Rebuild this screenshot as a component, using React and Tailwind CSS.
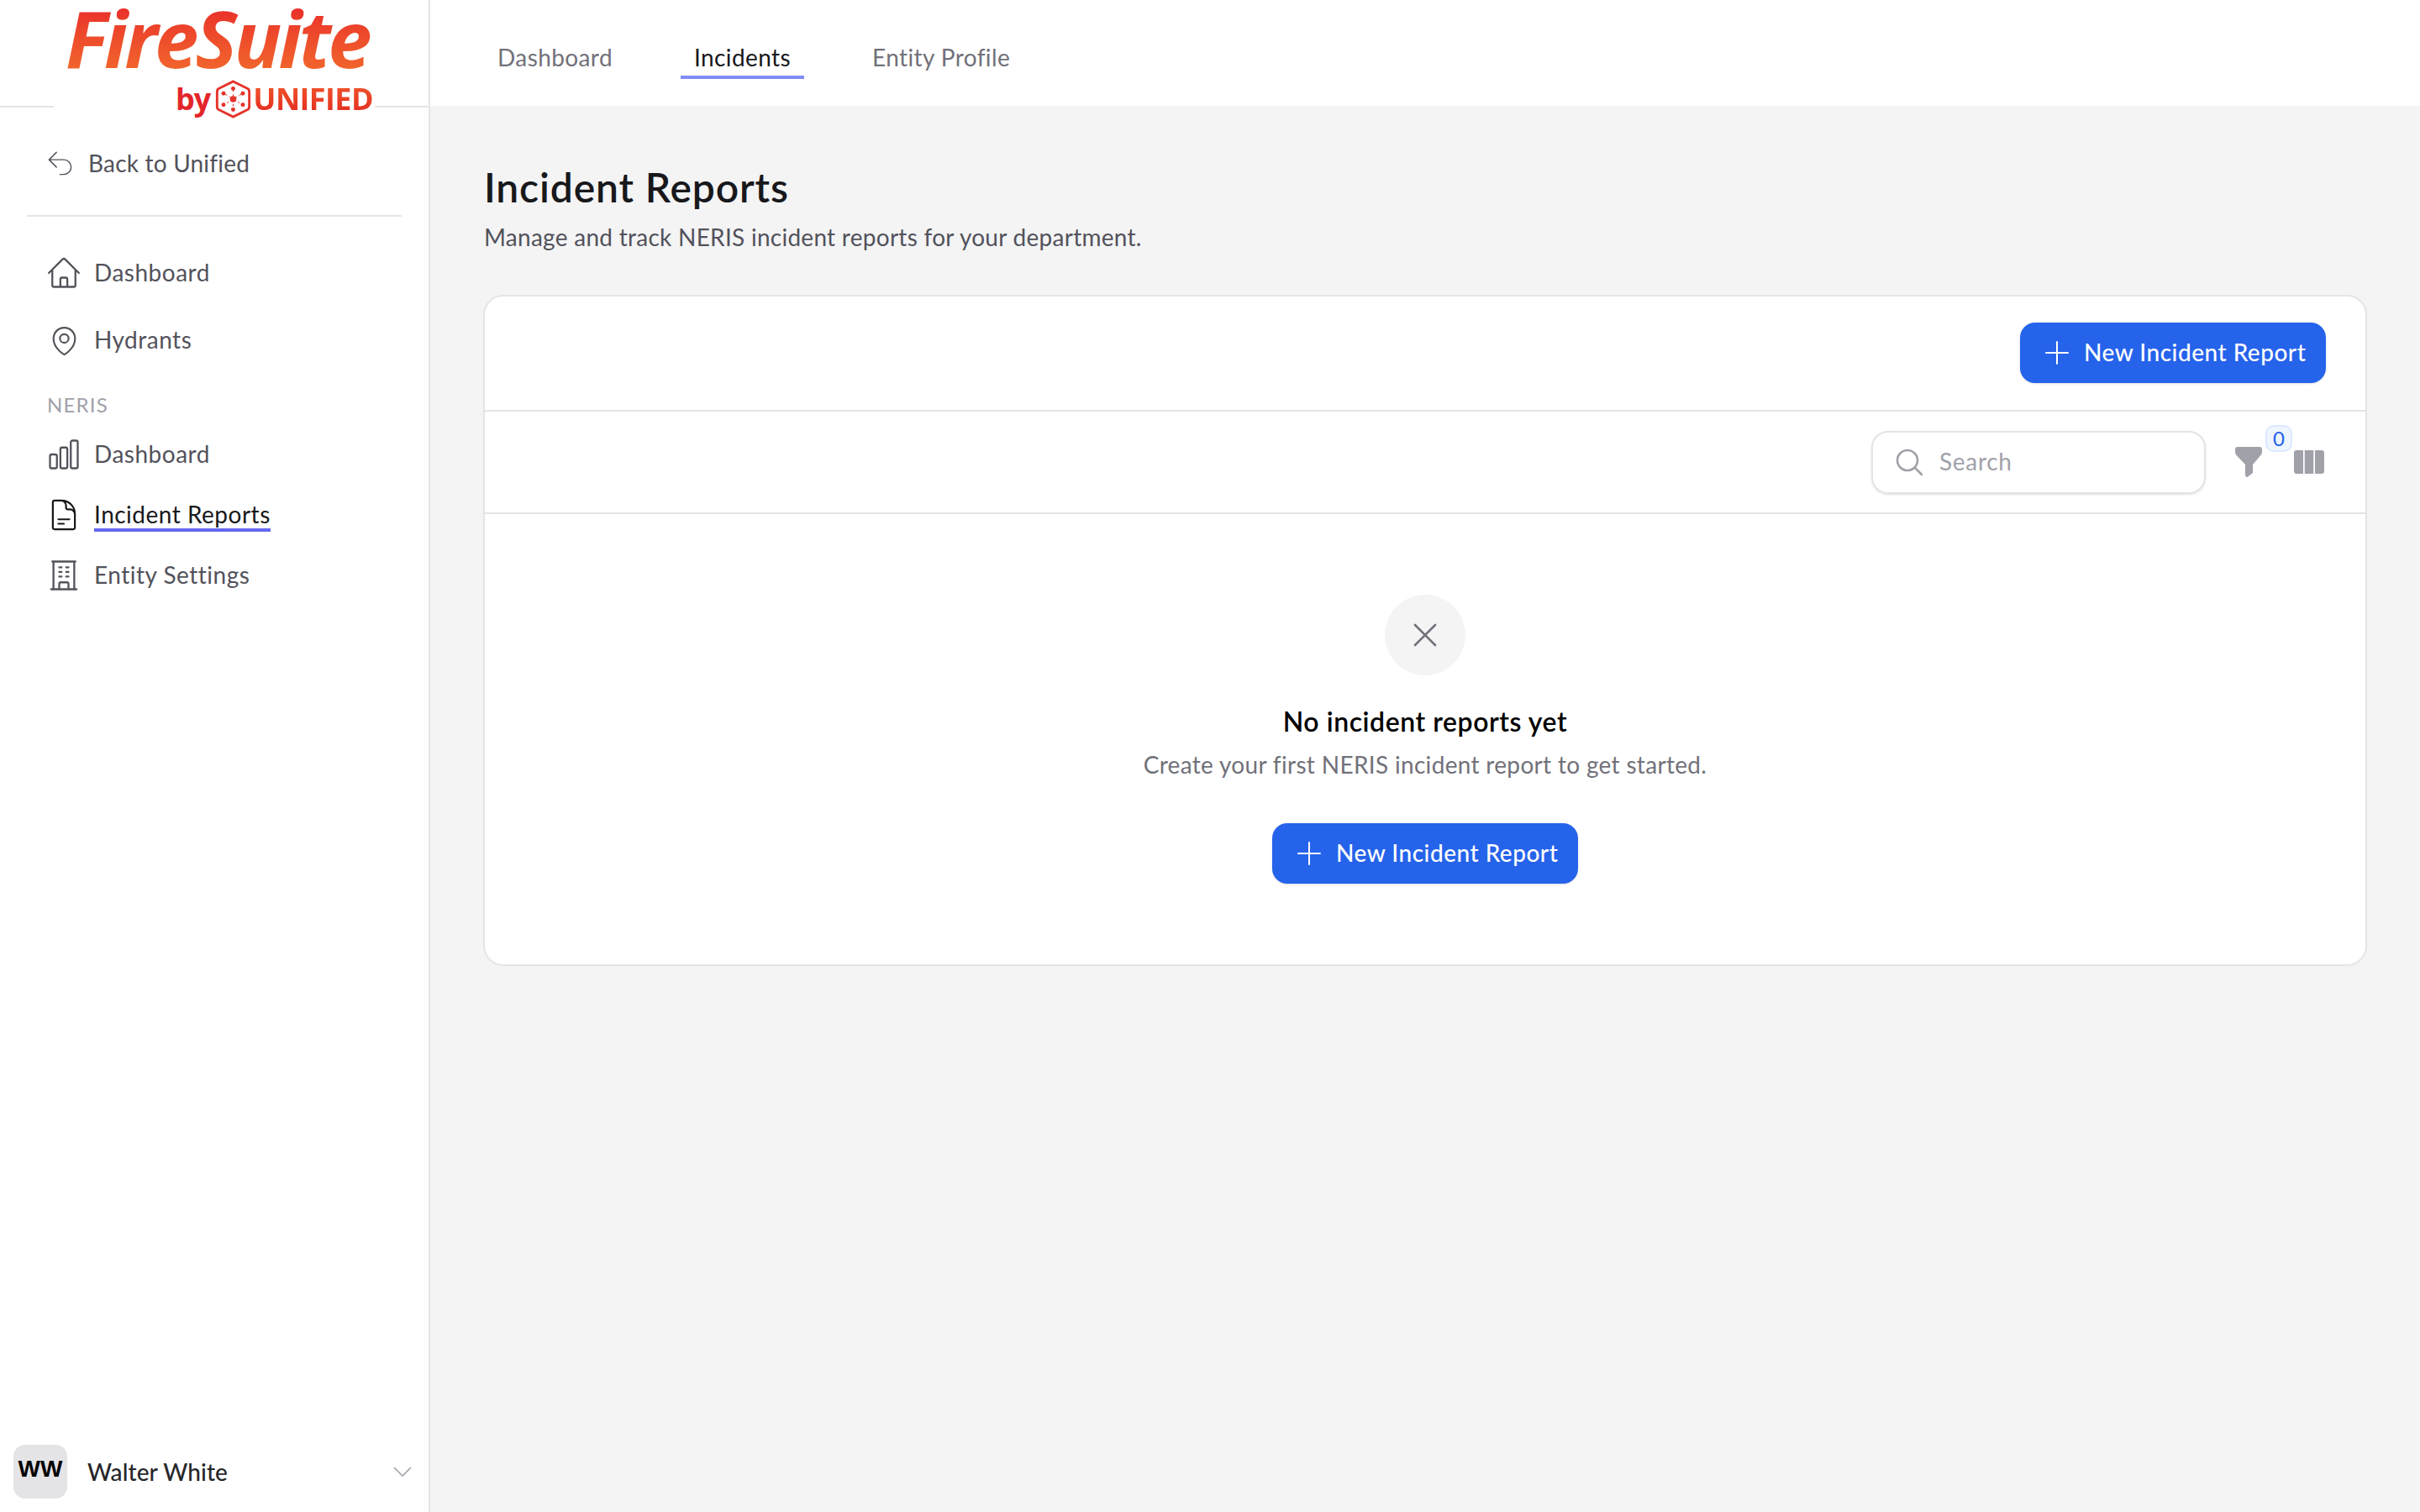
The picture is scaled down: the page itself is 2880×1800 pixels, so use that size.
import {
  HiOutlineArrowUturnLeft,
  HiOutlineBuildingOffice,
  HiOutlineChartBar,
  HiOutlineDocumentText,
  HiOutlineHome,
  HiOutlineMapPin,
} from 'react-icons/hi2';

function FireSuiteLogo() {
  return (
    <div className="absolute left-[64px] top-0 h-[150px] w-[382px] bg-white">
      <div className="ml-[14px] -mt-[3px] w-fit bg-gradient-to-b from-[#e81f2a] to-[#f26a2c] bg-clip-text pr-[10px] font-['Open_Sans',sans-serif] text-[94px] font-bold italic leading-[96px] tracking-[-3.8px] text-transparent">
        FireSuite
      </div>
      <div className="ml-[145px] flex h-[50px] items-center whitespace-nowrap font-['Open_Sans',sans-serif] text-[36px] font-bold leading-[46px] text-[#e3262a]">
        <span className="tracking-[-1px]">by</span>
        <svg viewBox="0 0 44 48" className="ml-[6px] h-[46px] w-[43px] shrink-0" fill="none">
          <path d="M22 2 L40 11 Q42 12 42 15 V33 Q42 36 40 37 L22 46 L4 37 Q2 36 2 33 V15 Q2 12 4 11 Z" stroke="#e5332a" strokeWidth="3" />
          <path d="M22 12V36M12 18L32 30M32 18L12 30" stroke="#e5332a" strokeWidth="1" strokeDasharray="3 3" />
          <circle cx="22" cy="24" r="4" fill="#e5332a" />
          <circle cx="22" cy="11" r="2.6" fill="#e5332a" />
          <circle cx="22" cy="37" r="2.6" fill="#e5332a" />
          <circle cx="10" cy="17" r="2.6" fill="#e5332a" />
          <circle cx="34" cy="17" r="2.6" fill="#e5332a" />
          <circle cx="10" cy="31" r="2.6" fill="#e5332a" />
          <circle cx="34" cy="31" r="2.6" fill="#e5332a" />
        </svg>
        <span className="ml-[2px] bg-gradient-to-b from-[#f0582c] to-[#e2231f] bg-clip-text tracking-[-0.6px] text-transparent">UNIFIED</span>
      </div>
    </div>
  );
}

function NavItem({ icon: Icon, label, height = 'h-[72px]', active = false, iconSize = 'w-[44px] h-[44px]' }) {
  return (
    <a className={`flex items-center pl-[54px] ${height} ${active ? 'text-[#18181b]' : 'text-[#52525b]'}`}>
      <span className="flex w-[44px] justify-center">
        <Icon className={iconSize} strokeWidth={1.25} />
      </span>
      <span className="relative ml-[14px] pb-[2px] text-[28px] leading-[40px] tracking-[0.5px]">
        {label}
        {active && <span className="absolute left-0 right-0 top-[37px] h-[4px] bg-[#6366f1]" />}
      </span>
    </a>
  );
}

function Sidebar() {
  return (
    <aside className="flex h-full w-[512px] shrink-0 flex-col border-r-2 border-[#e5e5e5] bg-white">
      <div className="relative h-[128px] shrink-0 border-b-2 border-[#e5e5e5]">
        <FireSuiteLogo />
      </div>
      <a className="mx-[32px] flex h-[130px] shrink-0 items-center border-b-2 border-[#e5e5e5] pl-[22px] pt-1 text-[#52525b]">
        <HiOutlineArrowUturnLeft className="h-[35px] w-[35px]" strokeWidth={1} />
        <span className="ml-[16px] text-[28px] leading-[40px] tracking-[0.2px]">Back to Unified</span>
      </a>
      <nav className="mt-[27px]">
        <NavItem icon={HiOutlineHome} label="Dashboard" height="h-[80px]" />
        <NavItem icon={HiOutlineMapPin} label="Hydrants" height="h-[80px]" iconSize="w-[41px] h-[41px]" />
        <div className="flex h-[60px] items-center pl-[56px] pt-[14px] text-[24px] leading-[32px] tracking-[1.2px] text-[#a1a1aa]">NERIS</div>
        <NavItem icon={HiOutlineChartBar} label="Dashboard" />
        <NavItem icon={HiOutlineDocumentText} label="Incident Reports" active iconSize="w-[42px] h-[42px]" />
        <NavItem icon={HiOutlineBuildingOffice} label="Entity Settings" />
      </nav>
      <div className="mt-auto flex items-center pb-[16px] pl-[16px] pr-[20px]">
        <div className="flex h-[64px] w-[64px] items-center justify-center rounded-[14px] bg-[#e4e4e7] pb-[6px] font-['Liberation_Sans',sans-serif] text-[28px] font-bold text-black">WW</div>
        <span className="ml-[24px] text-[28px] font-medium leading-[40px] tracking-[0.1px] text-[#27272a]">Walter White</span>
        <svg viewBox="0 0 22 12" className="ml-auto h-[12px] w-[22px]" fill="none" stroke="#a1a1aa" strokeWidth="1.6">
          <path d="M1 1 L11 11 L21 1" />
        </svg>
      </div>
    </aside>
  );
}

function Tabs() {
  const tabs = ['Dashboard', 'Incidents', 'Entity Profile'];
  return (
    <header className="flex h-[126px] shrink-0 gap-[65px] bg-white pl-[64px] pt-[48px]">
      {tabs.map((t) => (
        <a
          key={t}
          className={`h-[46px] border-b-4 px-[16px] text-[28px] leading-[40px] tracking-[0.4px] ${
            t === 'Incidents' ? 'border-[#818cf8] text-[#18181b]' : 'border-transparent text-[#71717a]'
          }`}
        >
          {t}
        </a>
      ))}
    </header>
  );
}

function NewReportButton() {
  return (
    <button className="flex h-[72px] w-[364px] items-center gap-[18px] rounded-[18px] bg-[#2563eb] pl-[30px] text-white shadow-sm">
      <svg viewBox="0 0 28 28" className="h-[28px] w-[28px]" stroke="currentColor" strokeWidth="2" strokeLinecap="round">
        <path d="M14 1V27M1 14H27" />
      </svg>
      <span className="pb-[3px] text-[28px] font-medium leading-[40px] tracking-[0.5px]">New Incident Report</span>
    </button>
  );
}

function Toolbar() {
  return (
    <div className="flex h-[122px] items-center justify-end border-b-2 border-[#e5e5e5] pr-[49px]">
      <div className="flex h-[75px] w-[398px] items-center rounded-[20px] border-2 border-[#e4e4e7] pl-[27px] shadow-sm">
        <svg viewBox="0 0 32 32" className="h-[32px] w-[32px]" fill="none" stroke="#a1a1aa" strokeWidth="2.6" strokeLinecap="round">
          <circle cx="14" cy="14" r="12" />
          <path d="M23 23L31 31" />
        </svg>
        <span className="ml-[20px] pb-[3px] text-[28px] leading-[40px] tracking-[0.7px] text-[#a1a1aa]">Search</span>
      </div>
      <div className="relative ml-[35px] h-[36px] w-[32px]">
        <svg viewBox="0 0 32 36" className="h-[36px] w-[32px]" fill="#a1a1aa">
          <path d="M3 0H29Q32 0 32 3V6Q32 8 30.5 10L21 21V31L14.5 36Q12 36 12 33V21L1.5 10Q0 8 0 6V3Q0 0 3 0Z" />
        </svg>
        <span className="absolute left-[36px] top-[-26px] flex h-[32px] w-[32px] items-center justify-center rounded-[10px] border-2 border-[#dbeafe] bg-[#eff6ff] text-[24px] leading-none text-[#2563eb]">0</span>
      </div>
      <svg viewBox="0 0 36 28" className="ml-[38px] h-[28px] w-[36px]" fill="#a1a1aa">
        <path d="M3 0H11V28H3Q0 28 0 25V3Q0 0 3 0Z" />
        <rect x="12.75" width="10.5" height="28" />
        <path d="M25 0H33Q36 0 36 3V25Q36 28 33 28H25Z" />
      </svg>
    </div>
  );
}

function EmptyState() {
  return (
    <div className="flex flex-col items-center pb-[96px] pt-[96px]">
      <div className="flex h-[96px] w-[96px] items-center justify-center rounded-full bg-[#f4f4f5]">
        <svg viewBox="0 0 28 28" className="h-[28px] w-[28px]" stroke="#71717a" strokeWidth="2.6" strokeLinecap="round">
          <path d="M2 2L26 26M26 2L2 26" />
        </svg>
      </div>
      <h3 className="mt-[35px] text-[32px] font-semibold leading-[40px] tracking-[0.55px] text-black">No incident reports yet</h3>
      <p className="mt-[11px] text-[28px] leading-[40px] tracking-[0.32px] text-[#71717a]">Create your first NERIS incident report to get started.</p>
      <div className="mt-[50px]">
        <NewReportButton />
      </div>
    </div>
  );
}

export default function App() {
  return (
    <div className="flex h-screen w-full overflow-hidden bg-[#f4f4f5] font-['Lato',sans-serif]">
      <Sidebar />
      <main className="flex min-w-0 flex-1 flex-col">
        <Tabs />
        <div className="px-[64px] pt-[67px]">
          <h1 className="text-[48px] font-semibold leading-[60px] tracking-[0.85px] text-[#18181b]">Incident Reports</h1>
          <p className="mt-[9px] text-[28px] leading-[40px] tracking-[0.27px] text-[#52525b]">Manage and track NERIS incident reports for your department.</p>
          <section className="-mx-px mt-[49px] rounded-[24px] border-2 border-[#e5e5e5] bg-white">
            <div className="flex h-[137px] justify-end border-b-2 border-[#e5e5e5] pr-[47px] pt-[31px]">
              <NewReportButton />
            </div>
            <Toolbar />
            <EmptyState />
          </section>
        </div>
      </main>
    </div>
  );
}
